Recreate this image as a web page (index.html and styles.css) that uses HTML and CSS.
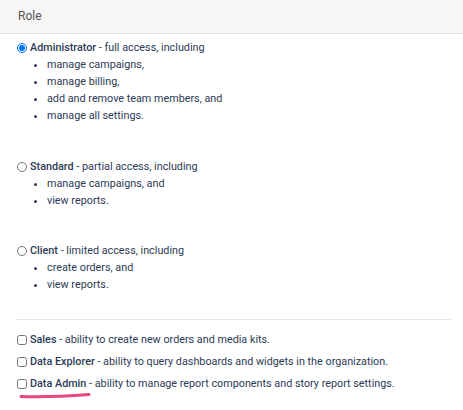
FILE: index.html
```html
<!DOCTYPE html>
<html lang="en">
<head>
  <meta charset="UTF-8" />
  <title>Role</title>
  <link rel="stylesheet" href="styles.css">
</head>
<body>
  <div class="header">Role</div>

  <div class="content">
    <div class="role">
      <label class="opt">
        <input type="radio" name="role" checked />
        <span><b>Administrator</b> - full access, including</span>
      </label>
      <ul>
        <li>manage campaigns,</li>
        <li>manage billing,</li>
        <li>add and remove team members, and</li>
        <li>manage all settings.</li>
      </ul>
    </div>

    <div class="role">
      <label class="opt">
        <input type="radio" name="role" />
        <span><b>Standard</b> - partial access, including</span>
      </label>
      <ul>
        <li>manage campaigns, and</li>
        <li>view reports.</li>
      </ul>
    </div>

    <div class="role last">
      <label class="opt">
        <input type="radio" name="role" />
        <span><b>Client</b> - limited access, including</span>
      </label>
      <ul>
        <li>create orders, and</li>
        <li>view reports.</li>
      </ul>
    </div>

    <hr />

    <div class="perms">
      <label class="opt">
        <input type="checkbox" />
        <span><b>Sales</b> - ability to create new orders and media kits.</span>
      </label>
      <label class="opt">
        <input type="checkbox" />
        <span><b>Data Explorer</b> - ability to query dashboards and widgets in the organization.</span>
      </label>
      <label class="opt">
        <input type="checkbox" />
        <span><b>Data Admin</b> - ability to manage report components and story report settings.</span>
      </label>
    </div>
    <svg class="scribble" width="74" height="8" viewBox="0 0 74 8">
      <path d="M2 5.5 C 20 6, 50 5, 70 3.5" stroke="#e8457a" stroke-width="3" fill="none" stroke-linecap="round" />
    </svg>
  </div>
</body>
</html>
```

FILE: styles.css
```css
body {
  margin: 0;
  font-family: Roboto, "Liberation Sans", sans-serif;
  font-size: 10.8px;
  color: #2b3a55;
  background: #fff;
}
.header {
  height: 33px;
  line-height: 33px;
  padding-left: 18px;
  background: #f6f6f6;
  border-bottom: 1px solid #e2e2e2;
  color: #555;
  font-size: 12px;
}
.content {
  padding: 5px 12px 0 17px;
}
.role {
  margin-bottom: 34px;
}
.role + .role {
  margin-bottom: 33px;
}
.role.last {
  margin-bottom: 26px;
}
.opt {
  display: flex;
  align-items: center;
  line-height: 17px;
}
.opt b {
  font-weight: 500;
}
.opt input {
  margin: 0 3px 0 0;
  width: 10px;
  height: 10px;
}
ul {
  margin: 0;
  padding-left: 30px;
  line-height: 17px;
}
hr {
  border: none;
  border-top: 1px solid #e6e6e6;
  margin: 0 0 11px 0;
}
.perms {
  display: flex;
  flex-direction: column;
  gap: 5px;
}
.scribble {
  display: block;
  margin: -1px 0 0 2px;
}
```
